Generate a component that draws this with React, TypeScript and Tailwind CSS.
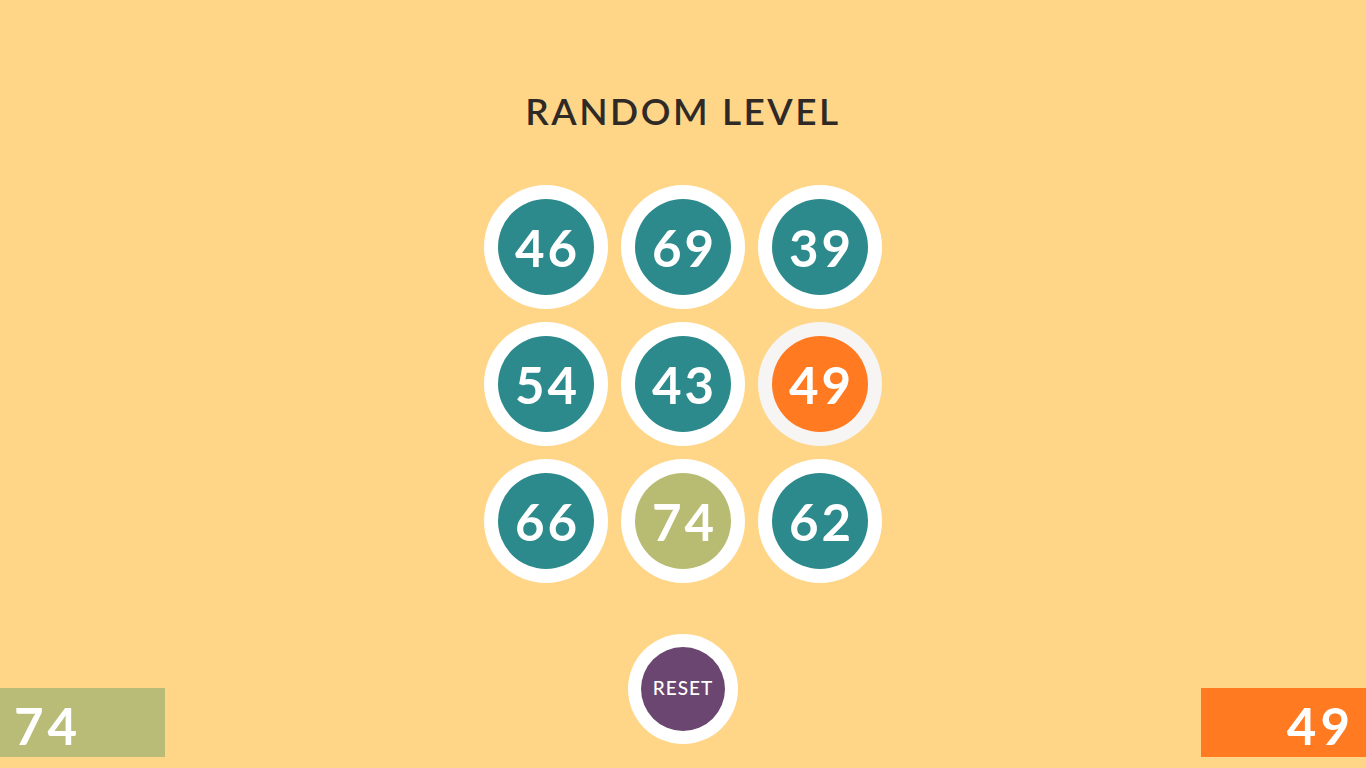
import React from "react";

type Cell = { n: number; color: string; ring: string };

const cells: Cell[] = [
  { n: 46, color: "bg-[#2d8a8c]", ring: "bg-white" },
  { n: 69, color: "bg-[#2d8a8c]", ring: "bg-white" },
  { n: 39, color: "bg-[#2d8a8c]", ring: "bg-white" },
  { n: 54, color: "bg-[#2d8a8c]", ring: "bg-white" },
  { n: 43, color: "bg-[#2d8a8c]", ring: "bg-white" },
  { n: 49, color: "bg-[#ff7a21]", ring: "bg-[#f7f4f4]" },
  { n: 66, color: "bg-[#2d8a8c]", ring: "bg-white" },
  { n: 74, color: "bg-[#b8bc72]", ring: "bg-white" },
  { n: 62, color: "bg-[#2d8a8c]", ring: "bg-white" },
];

export default function App() {
  return (
    <div className="w-[1366px] h-[768px] bg-[#ffd688] flex flex-col items-center overflow-hidden font-['Lato',sans-serif]">
      <h1 className="mt-[91px] h-[40px] text-[37px] leading-[40px] tracking-[2.5px] text-[#2f2a26] font-semibold">
        RANDOM LEVEL
      </h1>
      <div className="mt-[54px] grid grid-cols-3 gap-[13px]">
        {cells.map((c) => (
          <div
            key={c.n}
            className={`w-[124px] h-[124px] rounded-full ${c.ring} flex items-center justify-center`}
          >
            <div
              className={`w-[96px] h-[96px] rounded-full ${c.color} flex items-center justify-center text-white text-[51px] leading-none font-bold tracking-[3px] pl-[3px]`}
            >
              {c.n}
            </div>
          </div>
        ))}
      </div>
      <div className="mt-[51px] w-full flex justify-between items-start">
        <div className="mt-[54px] w-[165px] h-[69px] bg-[#b8bc77] flex items-center pl-[14px] pt-[6px] text-white text-[51px] leading-none font-bold tracking-[4px]">
          74
        </div>
        <div className="w-[110px] h-[110px] rounded-full bg-white flex items-center justify-center">
          <div className="w-[84px] h-[84px] rounded-full bg-[#6b4670] flex items-center justify-center pb-[3px] text-white text-[19px] leading-none font-medium tracking-[1px]">
            RESET
          </div>
        </div>
        <div className="mt-[54px] w-[165px] h-[69px] bg-[#ff7a21] flex items-center justify-end pr-[12px] pt-[6px] text-white text-[51px] leading-none font-bold tracking-[4px]">
          49
        </div>
      </div>
    </div>
  );
}
